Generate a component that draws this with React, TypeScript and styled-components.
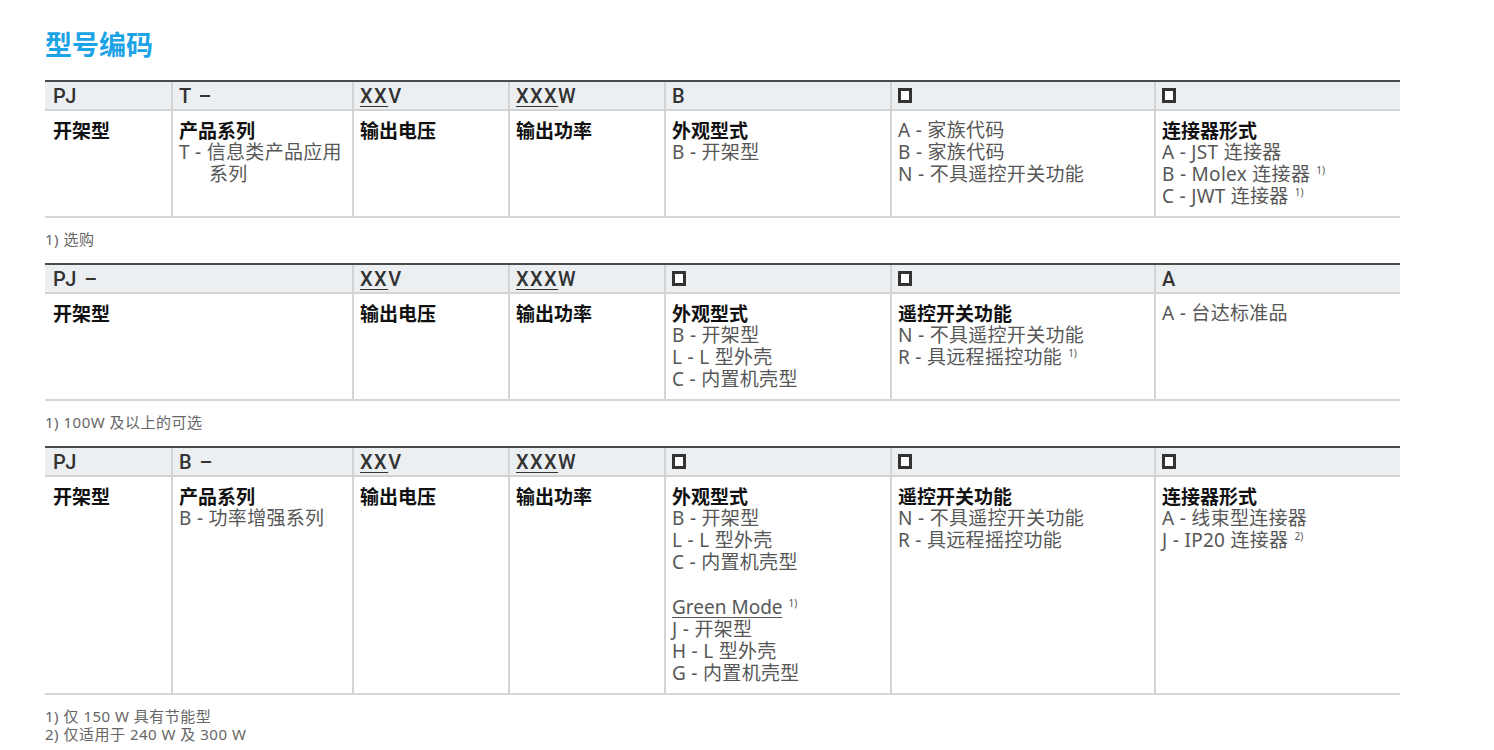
import React from "react";
import styled, { createGlobalStyle } from "styled-components";

const Global = createGlobalStyle`
  html, body { margin: 0; padding: 0; background: #ffffff; }
  body { font-family: "Noto Sans", "Noto Sans CJK SC", sans-serif; }
`;

const Page = styled.div`
  padding: 27px 0 0 45px;
  width: 1355px;
`;

const Title = styled.h1`
  margin: 0 0 19px 0;
  font-family: "Noto Sans CJK SC", sans-serif;
  font-weight: 700;
  font-size: 27px;
  line-height: 34px;
  color: #1ba3e6;
`;

const Grid = styled.div`
  display: grid;
  grid-template-columns: 126px 181px 156px 156px 226px 264px 246px;
  border-top: 2px solid #4a4a4a;
  border-bottom: 2px solid #d6d6d6;
`;

const HeadCell = styled.div<{ $span?: number; $first?: boolean }>`
  grid-column: span ${(p) => p.$span ?? 1};
  background: #eceff2;
  border-bottom: 2px solid #d3d3d3;
  border-left: ${(p) => (p.$first ? "none" : "2px solid #d3d3d3")};
  height: 27px;
  padding: 0 6px 0 ${(p) => (p.$first ? "8px" : "6px")};
  display: flex;
  align-items: center;
  font-family: Roboto, "Noto Sans CJK SC", sans-serif;
  font-weight: 500;
  font-size: 20px;
  color: #333333;
  letter-spacing: 1.4px;
`;

const BodyCell = styled.div<{ $span?: number; $first?: boolean }>`
  grid-column: span ${(p) => p.$span ?? 1};
  border-left: ${(p) => (p.$first ? "none" : "2px solid #d3d3d3")};
  padding: 8px 6px 9px ${(p) => (p.$first ? "8px" : "6px")};
  font-size: 19px;
  line-height: 22px;
  font-family: "Noto Sans", "Noto Sans CJK SC", sans-serif;
`;

const Label = styled.div`
  font-family: "Noto Sans CJK SC", sans-serif;
  font-weight: 700;
  color: #111111;
  font-size: 19px;
`;

const Item = styled.div<{ $hang?: boolean; $gapTop?: boolean }>`
  color: #575757;
  letter-spacing: 0.3px;
  padding-left: ${(p) => (p.$hang ? "30px" : "0")};
  text-indent: ${(p) => (p.$hang ? "-30px" : "0")};
  margin-top: ${(p) => (p.$gapTop ? "23px" : "0")};
`;

const Under = styled.span`
  text-decoration: underline;
  text-decoration-thickness: 1px;
  text-underline-offset: 3px;
`;

const GreenMode = styled(Under)`
  letter-spacing: 0;
`;

const Sup = styled.sup`
  font-size: 10px;
  vertical-align: 7px;
  line-height: 0;
  margin-left: 6px;
  letter-spacing: 0;
  color: #555555;
`;

const Box = styled.span`
  display: inline-block;
  width: 14px;
  height: 15px;
  box-sizing: border-box;
  border: 3px solid #333333;
  background: #ffffff;
`;

const Note = styled.div`
  padding-top: 12px;
  margin-bottom: 15px;
  font-size: 15px;
  line-height: 18px;
  color: #666666;
  letter-spacing: 0.5px;
  font-family: "Noto Sans", "Noto Sans CJK SC", sans-serif;
`;

type Col = {
  head: React.ReactNode;
  span?: number;
  body: React.ReactNode;
};

const TableBlock: React.FC<{ cols: Col[] }> = ({ cols }) => (
  <Grid>
    {cols.map((c, i) => (
      <HeadCell key={"h" + i} $span={c.span} $first={i === 0}>
        {c.head}
      </HeadCell>
    ))}
    {cols.map((c, i) => (
      <BodyCell key={"b" + i} $span={c.span} $first={i === 0}>
        {c.body}
      </BodyCell>
    ))}
  </Grid>
);

const XXV = () => (
  <span>
    <Under>XX</Under>V
  </span>
);
const XXXW = () => (
  <span>
    <Under>XXX</Under>W
  </span>
);

export default function App() {
  return (
    <>
      <Global />
      <Page>
        <Title>型号编码</Title>

        <TableBlock
          cols={[
            { head: "PJ", body: <Label>开架型</Label> },
            {
              head: "T –",
              body: (
                <>
                  <Label>产品系列</Label>
                  <Item $hang>T - 信息类产品应用系列</Item>
                </>
              ),
            },
            { head: <XXV />, body: <Label>输出电压</Label> },
            { head: <XXXW />, body: <Label>输出功率</Label> },
            {
              head: "B",
              body: (
                <>
                  <Label>外观型式</Label>
                  <Item>B - 开架型</Item>
                </>
              ),
            },
            {
              head: <Box />,
              body: (
                <>
                  <Item>A - 家族代码</Item>
                  <Item>B - 家族代码</Item>
                  <Item>N - 不具遥控开关功能</Item>
                </>
              ),
            },
            {
              head: <Box />,
              body: (
                <>
                  <Label>连接器形式</Label>
                  <Item>A - JST 连接器</Item>
                  <Item>
                    B - Molex 连接器<Sup>1)</Sup>
                  </Item>
                  <Item>
                    C - JWT 连接器<Sup>1)</Sup>
                  </Item>
                </>
              ),
            },
          ]}
        />
        <Note>1) 选购</Note>

        <TableBlock
          cols={[
            { head: "PJ –", span: 2, body: <Label>开架型</Label> },
            { head: <XXV />, body: <Label>输出电压</Label> },
            { head: <XXXW />, body: <Label>输出功率</Label> },
            {
              head: <Box />,
              body: (
                <>
                  <Label>外观型式</Label>
                  <Item>B - 开架型</Item>
                  <Item>L - L 型外壳</Item>
                  <Item>C - 内置机壳型</Item>
                </>
              ),
            },
            {
              head: <Box />,
              body: (
                <>
                  <Label>遥控开关功能</Label>
                  <Item>N - 不具遥控开关功能</Item>
                  <Item>
                    R - 具远程摇控功能<Sup>1)</Sup>
                  </Item>
                </>
              ),
            },
            {
              head: "A",
              body: <Item>A - 台达标准品</Item>,
            },
          ]}
        />
        <Note>1) 100W 及以上的可选</Note>

        <TableBlock
          cols={[
            { head: "PJ", body: <Label>开架型</Label> },
            {
              head: "B –",
              body: (
                <>
                  <Label>产品系列</Label>
                  <Item>B - 功率增强系列</Item>
                </>
              ),
            },
            { head: <XXV />, body: <Label>输出电压</Label> },
            { head: <XXXW />, body: <Label>输出功率</Label> },
            {
              head: <Box />,
              body: (
                <>
                  <Label>外观型式</Label>
                  <Item>B - 开架型</Item>
                  <Item>L - L 型外壳</Item>
                  <Item>C - 内置机壳型</Item>
                  <Item $gapTop>
                    <GreenMode>Green Mode</GreenMode>
                    <Sup>1)</Sup>
                  </Item>
                  <Item>J - 开架型</Item>
                  <Item>H - L 型外壳</Item>
                  <Item>G - 内置机壳型</Item>
                </>
              ),
            },
            {
              head: <Box />,
              body: (
                <>
                  <Label>遥控开关功能</Label>
                  <Item>N - 不具遥控开关功能</Item>
                  <Item>R - 具远程摇控功能</Item>
                </>
              ),
            },
            {
              head: <Box />,
              body: (
                <>
                  <Label>连接器形式</Label>
                  <Item>A - 线束型连接器</Item>
                  <Item>
                    J - IP20 连接器<Sup>2)</Sup>
                  </Item>
                </>
              ),
            },
          ]}
        />
        <Note>
          1) 仅 150 W 具有节能型
          <br />
          2) 仅适用于 240 W 及 300 W
        </Note>
      </Page>
    </>
  );
}
